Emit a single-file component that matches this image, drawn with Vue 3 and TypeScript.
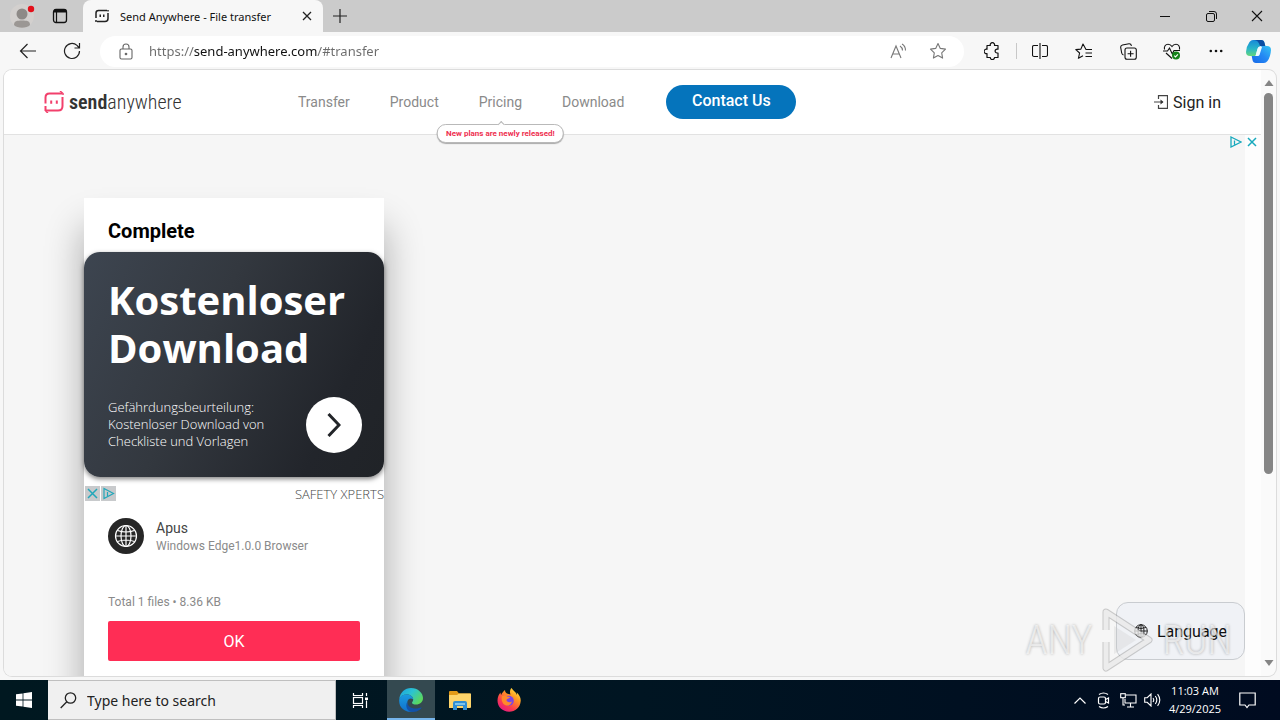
<script setup lang="ts">
import { ref } from 'vue'

interface NavItem {
  label: string
  note?: string
}

const nav: NavItem[] = [
  { label: 'Transfer' },
  { label: 'Product' },
  { label: 'Pricing', note: 'New plans are newly released!' },
  { label: 'Download' },
]

const url = ref('https://send-anywhere.com/#transfer')
const query = ref('')
</script>

<template>
  <div class="desktop">
    <header class="tabs">
      <button class="tab-btn profile" aria-label="Profile">
        <svg width="26" height="28" viewBox="0 0 26 28">
          <circle cx="13" cy="14" r="12" fill="#d3d0ce" />
          <circle cx="13" cy="12" r="5.500" fill="#8e8a87" />
          <path d="M5 23c0-4 3-4.500 8-4.500s8 .5 8 4.500c-3 3.500-13 3.500-16 0z" fill="#9b9794" />
          <circle cx="22" cy="7" r="3.200" fill="#e3101a" />
        </svg>
      </button>
      <button class="tab-btn" aria-label="Tab actions">
        <svg width="16" height="16" viewBox="0 0 16 16" fill="none" stroke="#111">
          <rect x="1.500" y="1.500" width="13" height="13" rx="2.500" stroke-width="1.300" />
          <path d="M2 3h12" stroke-width="3" /><path d="M4.500 4v10" stroke-width="1.200" />
        </svg>
      </button>
      <div class="tab">
        <svg width="14" height="14" viewBox="0 0 28 28" fill="none" stroke="#222" stroke-width="3">
          <path d="M2 18V8q0-5 5-5h17M26 8v11q0 6-6 6H4M2 22v4M26 2v3" />
          <path d="M10.500 11v5M17.500 11v5" stroke-width="3" />
        </svg>
        <span class="tab-title">Send Anywhere - File transfer</span>
        <button class="close" aria-label="Close tab">
          <svg width="10" height="10" viewBox="0 0 10 10" stroke="#222" stroke-width="1.300"><path d="M1 1l8 8M9 1L1 9" /></svg>
        </button>
      </div>
      <button class="new-tab" aria-label="New tab">
        <svg width="14" height="14" viewBox="0 0 14 14" stroke="#222" stroke-width="1.200"><path d="M7 0v14M0 7h14" /></svg>
      </button>
      <div class="window-controls">
        <button aria-label="Minimize"><svg width="10" height="10" viewBox="0 0 10 10"><path d="M0 5.500h10" stroke="#111" /></svg></button>
        <button aria-label="Restore">
          <svg width="11" height="11" viewBox="0 0 11 11" fill="none" stroke="#111"><rect x=".5" y="2.500" width="8" height="8" rx="1.500" /><path d="M3 .5h5q2.500 0 2.500 2.500v5" /></svg>
        </button>
        <button aria-label="Close window"><svg width="12" height="12" viewBox="0 0 12 12" stroke="#111" stroke-width="1.100"><path d="M1 1l10 10M11 1L1 11" /></svg></button>
      </div>
    </header>

    <div class="toolbar">
      <button class="tool" aria-label="Back">
        <svg width="18" height="16" viewBox="0 0 18 16" fill="none" stroke="#222" stroke-width="1.200"><path d="M17 8H1.500M8.500 1L1.500 8l7 7" /></svg>
      </button>
      <button class="tool" aria-label="Refresh">
        <svg width="18" height="18" viewBox="0 0 18 18" fill="none" stroke="#222" stroke-width="1.200"><path d="M16.500 9a7.500 7.500 0 1 1-2.500-5.600L16.300 6M16.500 1v5h-5" /></svg>
      </button>
      <div class="address">
        <svg class="lock" width="14" height="17" viewBox="0 0 14 17" fill="none" stroke="#666" stroke-width="1.100">
          <rect x="1" y="6" width="12" height="10" rx="1.500" /><path d="M4 6V4a3 3 0 0 1 6 0v2" /><circle cx="7" cy="11" r=".8" fill="#555" />
        </svg>
        <input v-model="url" class="url" type="text" aria-label="Address bar" spellcheck="false" />
        <button class="small-tool" aria-label="Read aloud">
          <svg width="17" height="16" viewBox="0 0 17 16" fill="none" stroke="#777" stroke-width="1.100"><path d="M1 15L6 3l5 12M2.800 11h6.400M10 3q2.500 1.500 2.500 4.500M12 1q3.500 2 3.500 6.500" /></svg>
        </button>
        <button class="small-tool" aria-label="Add to favorites">
          <svg width="18" height="18" viewBox="0 0 18 18" fill="none" stroke="#777" stroke-width="1.100" stroke-linejoin="round"><path d="M9 1.500l2.300 4.900 5.200.7-3.800 3.700.9 5.300L9 13.500l-4.600 2.600.9-5.300L1.500 7.100l5.200-.7z" /></svg>
        </button>
      </div>
      <button class="tool" aria-label="Extensions">
        <svg width="16" height="18" viewBox="0 0 16 18" fill="none" stroke="#111" stroke-width="1.200" stroke-linejoin="round"><path d="M3 3.500h3.300a2.200 2.200 0 1 1 4.200 0H14v3.700h-1a1.900 1.900 0 1 0 0 3.800h1v4.500h-3.500a2.100 2.100 0 0 1-4.200 0H3v-4a2.200 2.200 0 1 1 0-4.200z" /></svg>
      </button>
      <span class="divider"></span>
      <button class="tool" aria-label="Split screen">
        <svg width="16" height="16" viewBox="0 0 16 16" fill="none" stroke="#111" stroke-width="1.100"><path d="M6 2.500H2q-1.500 0-1.500 1.500v8q0 1.500 1.500 1.500h4M10 2.500h4q1.500 0 1.500 1.500v8q0 1.500-1.500 1.500h-4M8 0v16" /></svg>
      </button>
      <button class="tool" aria-label="Favorites">
        <svg width="18" height="17" viewBox="0 0 18 17" fill="none" stroke="#111" stroke-width="1.100" stroke-linejoin="round"><path d="M17 6.500h-6L8 1 5.900 6.100.8 6.600 4.600 10l-1.200 5.300L8 12.700M10.500 10H17M10.500 13.500H17" /></svg>
      </button>
      <button class="tool" aria-label="Collections">
        <svg width="17" height="17" viewBox="0 0 17 17" fill="none" stroke="#111" stroke-width="1.100"><rect x="5" y="5" width="11.300" height="11.300" rx="2" /><path d="M10.600 7.700v6M7.600 10.700h6M3.500 12Q2 11.500 1.700 10L.7 4.500Q.5 2.500 2.500 2L9 .8q2-.2 2.500 2" /></svg>
      </button>
      <button class="tool" aria-label="Browser essentials">
        <svg width="18" height="17" viewBox="0 0 18 17" fill="none" stroke="#111" stroke-width="1.100"><path d="M1.500 6.500C.8 3.500 2.500 1.200 5 1.200c2 0 3.200 1 4 2.300.8-1.300 2-2.300 4-2.300 2.500 0 4 2.300 3.500 5.300M0 8h4.500l2-3 2.800 6L11 7.500h6M3 10l6 5.500" /><circle cx="13" cy="12.500" r="4" fill="#16831b" stroke="none" /><path d="M11.200 12.600l1.300 1.300 2.400-2.600" stroke="#fff" /></svg>
      </button>
      <button class="tool" aria-label="Settings and more">
        <svg width="14" height="4" viewBox="0 0 14 4" fill="#111"><circle cx="1.800" cy="2" r="1.300" /><circle cx="7" cy="2" r="1.300" /><circle cx="12.200" cy="2" r="1.300" /></svg>
      </button>
      <button class="tool copilot" aria-label="Copilot">
        <svg width="25" height="23" viewBox="0 0 25 23">
          <defs>
            <linearGradient id="ca" x1="0" y1="0" x2="0" y2="1"><stop offset="0" stop-color="#1689d9" /><stop offset=".55" stop-color="#29b6c8" /><stop offset="1" stop-color="#64d67c" /></linearGradient>
            <linearGradient id="cb" x1="1" y1="0" x2="0" y2="1"><stop offset="0" stop-color="#35c5f3" /><stop offset=".5" stop-color="#2488f4" /><stop offset="1" stop-color="#1769e8" /></linearGradient>
          </defs>
          <path d="M7 0h8q3 0 3.500 3l.8 3H15q-2.500 0-3.300 2.500L9.500 16H4q-4 0-4-4Q.5 6 3.500 2 5 0 7 0z" fill="url(#ca)" />
          <path d="M8 0h7q3 0 3.500 3l.8 3H14q-1.500-6-6-6z" fill="#0b4da2" />
          <path d="M18 23h-8q-3 0-3.500-3l-.8-4H10q2.500 0 3.300-2.500L15.500 6H21q4 0 4 4-.5 7-3.500 11-1.500 2-3.500 2z" fill="url(#cb)" />
          <path d="M13 7h3l-2.500 8q-.5 1-1.500 1H9.500l2-7q.5-2 1.500-2z" fill="#eefaff" />
        </svg>
      </button>
    </div>

    <div class="viewport">
      <div class="site">
        <header class="site-header">
          <a class="logo" href="#" aria-label="sendanywhere">
            <svg width="20" height="22" viewBox="0 0 20 22" fill="none" stroke="#f2406c" stroke-width="2">
              <path d="M1.500 12.500V6.500q0-4 4-4H18M18.500 6v9q0 4.500-4.500 4.500H2.500M1.500 15v5" />
              <path d="M16 0l3 2.500V4M4 22l-2.500-2" stroke-width="1.500" /><path d="M7.200 9.500v3.200M12.800 9.500v3.200" />
            </svg>
            <span class="brand"><b>send</b>anywhere</span>
          </a>
          <nav class="nav">
            <a v-for="item in nav" :key="item.label" href="#" class="nav-link">
              {{ item.label }}
              <span v-if="item.note" class="note">{{ item.note }}</span>
            </a>
            <a class="contact" href="#">Contact Us</a>
          </nav>
          <a class="signin" href="#">
            <svg width="14" height="14" viewBox="0 0 14 14" fill="none" stroke="#444" stroke-width="1.200"><path d="M4.500 4V.7h9v12.600h-9V10M0 7h9" /><path d="M6.500 4.500L9.500 7l-3 2.500z" fill="#333" stroke="none" /></svg>
            Sign in
          </a>
        </header>

        <main class="content">
          <div class="ad-marks">
            <svg width="12" height="12" viewBox="0 0 12 12" fill="none" stroke="#17a9bd" stroke-width="1.300"><path d="M1 1l10 5-10 5zM4.500 4.500v4" /></svg>
            <svg width="12" height="12" viewBox="0 0 12 12" stroke="#17a9bd" stroke-width="1.500"><path d="M2 2l8 8M10 2l-8 8" /></svg>
          </div>

          <section class="card">
            <h1>Complete</h1>
            <article class="ad">
              <h2>Kostenloser Download</h2>
              <div class="ad-foot">
                <p>Gefährdungsbeurteilung: Kostenloser Download von Checkliste und Vorlagen</p>
                <button class="ad-go" aria-label="Open">
                  <svg width="14" height="24" viewBox="0 0 14 24" fill="none" stroke="#222529" stroke-width="3"><path d="M1.500 1l10.500 11L1.500 23" /></svg>
                </button>
              </div>
            </article>
            <div class="ad-source">
              <span class="ad-tags">
                <svg width="15" height="15" viewBox="0 0 15 15"><path d="M0 0h15v15H0z" fill="#c8cacc" /><path d="M3 3l9 9M12 3l-9 9" stroke="#22a7ba" stroke-width="1.500" /></svg>
                <svg width="15" height="15" viewBox="0 0 15 15"><path d="M0 0h15v15H0z" fill="#c8cacc" /><path d="M3 2.500l9.500 5L3 12.500zM6.500 6v4" fill="none" stroke="#22a7ba" stroke-width="1.200" /></svg>
              </span>
              <span>SAFETY XPERTS</span>
            </div>
            <div class="device">
              <svg width="36" height="36" viewBox="0 0 36 36" fill="none" stroke="#fff" stroke-width="1.200">
                <circle cx="18" cy="18" r="18" fill="#262626" stroke="none" />
                <circle cx="18" cy="18" r="10.500" /><ellipse cx="18" cy="18" rx="5" ry="10.500" /><path d="M18 7.500v21M7.500 18h21M9.500 12.500q8.500 3 17 0M9.500 23.500q8.500-3 17 0" />
              </svg>
              <div>
                <div class="device-name">Apus</div>
                <div class="device-info">Windows Edge1.0.0 Browser</div>
              </div>
            </div>
            <div class="total">Total 1 files • 8.36 KB</div>
            <button class="ok">OK</button>
          </section>

          <button class="language">
            <svg width="14" height="14" viewBox="0 0 14 14" fill="none" stroke="#222"><circle cx="7" cy="7" r="6.300" /><ellipse cx="7" cy="7" rx="3" ry="6.300" /><path d="M7 .7v12.600M.7 7h12.600M2 3.500q5 2 10 0M2 10.500q5-2 10 0" /></svg>
            Language
          </button>
          <div class="watermark">
            <span>ANY</span>
            <svg width="52" height="64" viewBox="0 0 52 64" fill="none" stroke-linejoin="round">
              <path d="M4 22V4l43 28L4 60V34" stroke="#888" stroke-opacity=".4" stroke-width="7" />
              <path d="M4 22V4l43 28L4 60V34" stroke="#fff" stroke-opacity=".65" stroke-width="5" />
              <path d="M12 18v28l22-14z" fill="#c4c4c4" fill-opacity=".25" />
            </svg>
            <span>RUN</span>
          </div>
        </main>
      </div>
      <div class="scrollbar">
        <svg width="10" height="6" viewBox="0 0 10 6"><path d="M5 0l4.500 6h-9z" fill="#858585" /></svg>
        <div class="track"><div class="thumb"></div></div>
        <svg width="10" height="6" viewBox="0 0 10 6"><path d="M5 6L.5 0h9z" fill="#858585" /></svg>
      </div>
    </div>

    <footer class="taskbar">
      <button class="task start" aria-label="Start">
        <svg width="16" height="16" viewBox="0 0 16 16" fill="#fff"><path d="M0 2.300L6.600 1.400v6.200H0zM7.400 1.300L16 0v7.600H7.400zM0 8.400h6.600v6.200L0 13.700zM7.400 8.400H16V16l-8.600-1.300z" /></svg>
      </button>
      <label class="search">
        <svg width="17" height="17" viewBox="0 0 17 17" fill="none" stroke="#222" stroke-width="1.300"><circle cx="10.500" cy="6" r="5.200" /><path d="M6.800 9.700L.7 16" /></svg>
        <input v-model="query" type="text" placeholder="Type here to search" aria-label="Type here to search" />
      </label>
      <button class="task task-view" aria-label="Task view">
        <svg width="17" height="17" viewBox="0 0 17 17" fill="none" stroke="#fff" stroke-width="1.200"><path d="M1.500 1v2.500h9V1M1.500 16v-2.500h9V16M14.500 1v3M14.500 8.500V16" /><rect x="1.500" y="5.500" width="9" height="6" /><path d="M13 5.500h3v2.500h-3z" fill="#fff" stroke="none" /></svg>
      </button>
      <button class="task active" aria-label="Microsoft Edge">
        <svg width="24" height="24" viewBox="0 0 24 24">
          <defs>
            <linearGradient id="ea" x1="0" y1="0" x2="1" y2=".6"><stop offset="0" stop-color="#1aa0e0" /><stop offset=".5" stop-color="#2bc3d2" /><stop offset="1" stop-color="#5bd85c" /></linearGradient>
            <linearGradient id="eb" x1="0" y1="0" x2="0" y2="1"><stop offset="0" stop-color="#1a9be0" /><stop offset="1" stop-color="#1170cc" /></linearGradient>
          </defs>
          <path d="M.3 11C1 4.500 6 0 12 0c7 0 12 5 12 10 0 4-3 6.500-7 6.500-2.500 0-4-.8-4-1.800 0-.8 1.200-1.200 1.200-3.200C14.200 8.500 11 6.500 8 6.500c-4 0-6.700 2-7.700 4.500z" fill="url(#ea)" />
          <path d="M.2 12C.5 8.500 4 6.300 8 6.500c4 0 6.200 2.700 6.200 5-1.500-2-6-1.300-6 3.500 0 4 3.300 8 7.500 8C8 26-.5 20.500.2 12z" fill="url(#eb)" />
          <path d="M8.200 14c.2 4.500 4.500 6.500 8.300 6.500 3 0 5.500-1.500 6-1 .5.600-3.500 4.500-8.500 4.500C8 24 6 18 8.200 14z" fill="#1251a8" />
        </svg>
      </button>
      <button class="task" aria-label="File Explorer">
        <svg width="22" height="19" viewBox="0 0 22 19"><path d="M0 1q0-1 1-1h7l2 2.500h11V6H0z" fill="#e29a17" /><path d="M0 4h8l2-1.500h12V16q0 1-1 1H0z" fill="#fdd46a" /><path d="M4 19v-7q0-2 2-2h10q2 0 2 2v7h-4v-4H8v4z" fill="#2f8ed3" /><path d="M6 12h10v2H6z" fill="#7bc4ee" /></svg>
      </button>
      <button class="task" aria-label="Firefox">
        <svg width="24" height="24" viewBox="0 0 24 24">
          <defs><linearGradient id="ff" x1=".9" y1="0" x2=".2" y2="1"><stop offset="0" stop-color="#fff04a" /><stop offset=".35" stop-color="#ff9a22" /><stop offset=".7" stop-color="#fb3d4d" /><stop offset="1" stop-color="#e31587" /></linearGradient></defs>
          <path d="M14.500 0c1 1.500 2 2.500 3.300 3.800C19 5 19.500 6 20 7c0-1 0-1.500-.3-2.500C22 6.500 24 9.500 23.700 13c-.4 6.500-5.500 10.700-11.500 10.700C5.500 23.700.5 19 .5 12.500.5 9 2 6 3.500 4.500c0 1 .2 1.700.6 2.500C5 5 6.500 3 8 2c0 2 1 3.500 3.500 4l2 .5C12.500 4 13 1.500 14.500 0z" fill="url(#ff)" />
          <circle cx="11.800" cy="12.800" r="5" fill="#7a45e6" /><path d="M5 8c2-1 4-.5 5 .5l3 .5c0 1.500-3 1.500-3.500 3 0 2 3 3 5.500 1.500-1 3.500-4 5-7 3.500C5 15.500 4 11 5 8z" fill="#ff8a2a" />
        </svg>
      </button>
      <div class="tray">
        <button aria-label="Show hidden icons"><svg width="12" height="7" viewBox="0 0 12 7" fill="none" stroke="#fff" stroke-width="1.200"><path d="M.5 6.500L6 1l5.500 5.500" /></svg></button>
        <button aria-label="Meet now"><svg width="14" height="17" viewBox="0 0 14 17" fill="none" stroke="#fff" stroke-width="1.200"><rect x="1.500" y="5" width="7" height="7" rx="1.500" /><path d="M8.500 7.500l3-1.500v5l-3-1.500M2 2.500Q6.500-.5 11 2.500M2 14.500q4.500 3 9 0" /></svg></button>
        <button aria-label="Network"><svg width="17" height="15" viewBox="0 0 17 15" fill="none" stroke="#fff" stroke-width="1.100"><path d="M6 2h10v8H5V6M10.500 10v4M7 14h7M3 5v7h2" /><rect x=".7" y=".7" width="4.600" height="4" /></svg></button>
        <button aria-label="Volume"><svg width="17" height="14" viewBox="0 0 17 14" fill="none" stroke="#fff" stroke-width="1.100"><path d="M.7 4.700h2.500L7 1v12L3.200 9.300H.7zM9 5q1.500 2 0 4M11.300 3q3 4 0 8M13.600 1.200q4.400 5.800 0 11.600" /></svg></button>
      </div>
      <div class="clock"><span>11:03 AM</span><span>4/29/2025</span></div>
      <button class="notify" aria-label="Notifications"><svg width="17" height="17" viewBox="0 0 17 17" fill="none" stroke="#fff" stroke-width="1.200"><path d="M.8 1h15.400v12H10l-2 2.500L6 13H.8z" /></svg></button>
    </footer>
  </div>
</template>

<style>
body { margin: 0; }
</style>

<style scoped>
* { box-sizing: border-box; }
svg { display: block; flex: none; }
button, input { font: inherit; color: inherit; border: 0; padding: 0; margin: 0; background: none; }
a { color: inherit; text-decoration: none; }
button { display: flex; align-items: center; justify-content: center; }
h1, h2, p { margin: 0; }

.desktop { display: flex; flex-direction: column; height: 100vh; overflow: hidden; background: #f7f7f7; font-family: "Noto Sans", "Open Sans", sans-serif; color: #111; }

.tabs { display: flex; height: 32px; flex: none; background: #cbcbcb; padding-left: 3px; }
.tab-btn { width: 38px; }
.tab-btn + .tab-btn { margin-right: 4px; }
.tab { display: flex; align-items: center; gap: 11px; width: 240px; background: #f7f7f7; border-radius: 8px 8px 0 0; padding: 0 6px 0 12px; font-size: 11px; }
.tab-title { flex: 1; white-space: nowrap; }
.close { width: 20px; height: 20px; }
.new-tab { width: 34px; }
.window-controls { display: flex; margin-left: auto; }
.window-controls button { width: 46px; }

.toolbar { display: flex; align-items: center; height: 38px; flex: none; padding-left: 6px; }
.tool { width: 44px; height: 32px; flex: none; }
.copilot { width: 42px; padding-right: 2px; }
.address { display: flex; align-items: center; flex: 1; height: 31px; margin: 0 6px; padding: 0 6px 0 19px; border-radius: 16px; background: #fff; }
.url { flex: 1; min-width: 0; margin-left: 16px; height: 24px; font-size: 13px; outline: 0; color: transparent; background: linear-gradient(90deg, #6b6b6b 45px, #111 45px, #111 168px, #6b6b6b 168px); background-clip: text; }
.small-tool { width: 40px; height: 28px; }
.divider { width: 1px; height: 16px; margin: 0 1px 0 2px; background: #c8c8c8; }

.viewport { display: flex; flex: 1; min-height: 0; margin: 0 4px 4px; border-radius: 8px; overflow: hidden; background: #fafafa; box-shadow: 0 0 0 1px #dcdcdc; font-family: Roboto, sans-serif; }
.site { display: flex; flex-direction: column; flex: 1; min-width: 0; }
.site-header { position: relative; z-index: 1; display: flex; align-items: center; flex: none; height: 65px; padding: 0 40px; background: #fff; border-bottom: 1px solid #e2e2e2; }
.logo { display: flex; align-items: center; gap: 5px; width: 254px; }
.brand { font-family: "Roboto Condensed", "Open Sans Condensed", Roboto, sans-serif; font-size: 20px; line-height: 24px; font-weight: 300; color: #333; }
.brand b { font-weight: 600; }
.nav { display: flex; align-items: center; gap: 40px; font-size: 14px; color: #8a8a8a; }
.nav-link { position: relative; }
.note { position: absolute; top: 30px; left: 50%; transform: translateX(-50%); padding: 0 8px; white-space: nowrap; font-size: 8px; line-height: 17px; font-weight: 700; color: #ee3050; background: #fff; border: 1px solid #b9b9b9; border-radius: 9px; box-shadow: 0 1px 1px #aaa; }
.note::before { content: ""; position: absolute; top: -3px; left: 50%; width: 4px; height: 4px; margin-left: -2px; transform: rotate(45deg); background: #fff; border: solid #b9b9b9; border-width: 1px 0 0 1px; }
.contact { width: 130px; margin-left: 2px; text-align: center; line-height: 32px; padding-bottom: 2px; border-radius: 17px; background: #0574bc; color: #fff; font-size: 16px; font-weight: 500; }
.signin { display: flex; align-items: center; gap: 5px; margin-left: auto; font-size: 16px; color: #222; }

.content { position: relative; flex: 1; min-height: 0; overflow: hidden; padding: 63px 80px 0; background: linear-gradient(to left, #fdfdfd 16px, #f6f6f6 16px); }
.ad-marks { position: absolute; top: 1px; right: 3px; display: flex; gap: 4px; }
.card { width: 300px; height: 540px; background: #fff; box-shadow: 0 30px 36px rgba(0, 0, 0, .32); }
h1 { padding: 20px 24px 8px; font-size: 20px; line-height: 26px; font-weight: 700; color: #000; }
.ad { height: 225px; padding: 24px 22px 0 24px; border-radius: 16px; background: linear-gradient(115deg, #3d4550, #33383f 40%, #22252b 80%, #202327); color: #fff; box-shadow: 0 2px 5px rgba(0, 0, 0, .5); font-family: "Open Sans", sans-serif; }
h2 { font-size: 40px; line-height: 48px; font-weight: 700; }
.ad-foot { display: flex; align-items: center; justify-content: space-between; margin-top: 25px; }
.ad-foot p { width: 176px; padding-bottom: 2px; font-size: 13px; line-height: 17px; font-weight: 300; }
.ad-go { width: 56px; height: 56px; border-radius: 50%; background: #fff; }
.ad-source { display: flex; align-items: center; justify-content: space-between; height: 33px; padding-left: 1px; font-family: "Open Sans", sans-serif; font-size: 13px; font-weight: 300; color: #444; }
.ad-tags { display: flex; gap: 1px; }
.device { display: flex; align-items: center; gap: 12px; height: 36px; margin: 8px 24px 0; }
.device-name { font-size: 14px; line-height: 20px; color: #444; }
.device-info { font-size: 12px; line-height: 17px; color: #8a8a8a; }
.total { margin: 39px 24px 9px; font-size: 12px; line-height: 19px; color: #8a8a8a; }
.ok { width: 252px; height: 40px; margin: 0 24px; border-radius: 2px; background: #ff2d55; color: #fff; font-size: 16px; }
.language { position: absolute; right: 16px; bottom: 16px; gap: 9px; width: 129px; height: 58px; border: 1px solid #c9ccd0; border-radius: 12px; background: #f0f2f6; font-size: 16px; color: #111; }
.watermark { position: absolute; right: 29px; bottom: 4px; display: flex; align-items: center; gap: 9px; pointer-events: none; font-family: "Roboto Condensed", "Liberation Sans Narrow", Roboto, sans-serif; font-size: 40px; font-weight: 300; color: rgba(255, 255, 255, .6); text-shadow: 0 0 3px rgba(0, 0, 0, .3); }

.scrollbar { display: flex; flex-direction: column; align-items: center; width: 15px; padding: 10px 0; }
.track { flex: 1; width: 9px; padding: 7px 0; }
.thumb { height: 68%; border-radius: 5px; background: #858585; }

.taskbar { display: flex; flex: none; height: 40px; background: linear-gradient(90deg, #001820, #001522 50%, #000b20); color: #fff; }
.task { width: 49px; flex: none; }
.task.start, .task.active { width: 48px; }
.task.task-view { width: 51px; padding-right: 2px; }
.task.active { background: #344950; box-shadow: inset 0 -2px #76b5ec; }
.search { display: flex; align-items: center; gap: 10px; width: 288px; padding-left: 12px; background: #f0f0f0; border: solid #bfbfbf; border-width: 1px 1px 1px 0; color: #333; }
.search input { flex: 1; min-width: 0; font-size: 14px; outline: 0; }
.search input::placeholder { color: #222; opacity: 1; }
.tray { display: flex; margin-left: auto; }
.tray button { width: 24px; }
.clock { display: flex; flex-direction: column; align-items: center; justify-content: center; width: 62px; font-family: "Open Sans", sans-serif; font-size: 11px; line-height: 18px; }
.notify { width: 42px; margin-right: 12px; }
</style>
